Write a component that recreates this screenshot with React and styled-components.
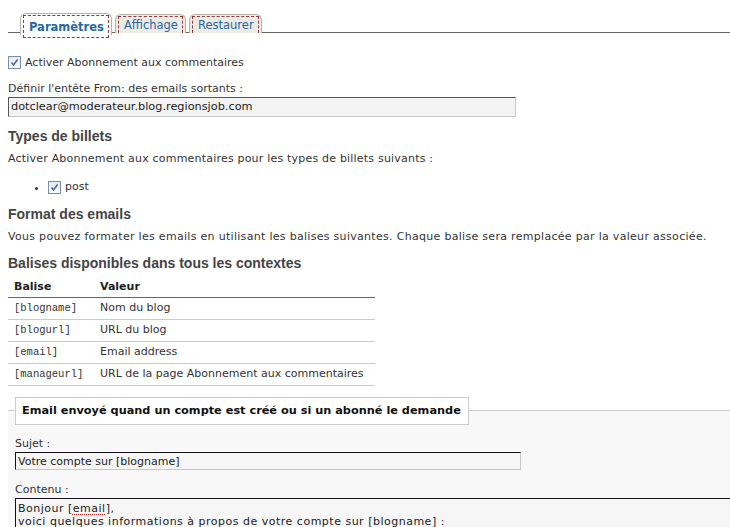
import React from 'react';
import styled, { createGlobalStyle } from 'styled-components';

const GlobalStyle = createGlobalStyle`
  html, body {
    margin: 0;
    padding: 0;
    background: #fff;
  }
  body {
    font-family: 'DejaVu Sans', Verdana, sans-serif;
    font-size: 11px;
    color: #333;
  }
`;

const Page = styled.div`
  padding: 13px 0 0 8px;
  overflow: hidden;
  height: 514px;
`;

const TabBar = styled.ul`
  display: flex;
  gap: 3px;
  margin: 0;
  padding: 0 0 0 12px;
  list-style: none;
  border-bottom: 1px solid #666;
  height: 19px;
`;

const Tab = styled.li`
  height: ${(p) => (p.$active ? '21px' : '18px')};
  margin-top: ${(p) => (p.$active ? '0' : '1px')};
  padding: 0 2px;
  border: 1px solid #b5b2aa;
  border-bottom: none;
  border-radius: 6px 6px 0 0;
  background: ${(p) => (p.$active ? '#fff' : '#edebe5')};
  display: flex;
  position: relative;
  z-index: ${(p) => (p.$active ? 2 : 1)};
`;

const TabLabel = styled.a`
  display: flex;
  align-items: center;
  padding: 0 4px 0 5px;
  margin-top: 1px;
  border: 1px dashed #8a3a3a;
  ${(p) => (p.$active ? 'margin-bottom: -3px;' : 'border-bottom: none;')}
  color: #2568a0;
  font-weight: ${(p) => (p.$active ? 'bold' : 'normal')};
  font-size: 11.5px;
  text-decoration: none;
`;

const CheckRow = styled.label`
  display: flex;
  align-items: center;
  gap: 4px;
  margin: ${(p) => p.$m || '0'};
`;

const Check = styled.span`
  width: 11px;
  height: 11px;
  border: 1px solid #7a8ea8;
  background: linear-gradient(#e4eaf2, #fafbfd);
  display: inline-flex;
  align-items: center;
  justify-content: center;
  flex: none;
`;

const CheckBox = () => (
  <Check>
    <svg width="9" height="9" viewBox="0 0 9 9">
      <path d="M1.5 4.5 L3.5 7 L7.5 1.5" fill="none" stroke="#4a6aa8" strokeWidth="1.6" />
    </svg>
  </Check>
);

const Label = styled.div`
  margin: ${(p) => p.$m || '0'};
  line-height: 13px;
`;

const TextInput = styled.div`
  width: ${(p) => p.$w};
  height: ${(p) => p.$h || '20px'};
  box-sizing: border-box;
  border: 1px solid #c8c8c8;
  border-top-color: ${(p) => p.$dark || '#777'};
  border-left-color: ${(p) => p.$dark || '#777'};
  background: ${(p) => p.$bg || '#f4f4f4'};
  padding: 2px 2px 1px;
  font-size: ${(p) => p.$fs || '11.3px'};
  color: #222;
  line-height: 14px;
  white-space: nowrap;
  overflow: hidden;
`;

const Heading = styled.h3`
  margin: ${(p) => p.$m || '0'};
  font-family: 'Liberation Sans', Arial, sans-serif;
  font-size: 14px;
  font-weight: bold;
  color: #444;
  line-height: 16px;
`;

const Para = styled.p`
  margin: ${(p) => p.$m || '0'};
  line-height: 13px;
  letter-spacing: ${(p) => p.$ls || '0'};
  white-space: nowrap;
`;

const List = styled.ul`
  margin: 15px 0 0;
  padding-left: 40px;
  list-style: disc;
  li::marker {
    font-size: 10px;
  }
`;

const ListItem = styled.li`
  line-height: 14px;
  & > label {
    display: inline-flex;
    align-items: center;
    gap: 4px;
  }
`;

const Table = styled.table`
  margin-top: 4px;
  width: 367px;
  border-collapse: collapse;
`;

const Th = styled.th`
  text-align: left;
  font-weight: bold;
  padding: 4px 6px 3px;
  border-bottom: 1px solid #666;
  height: 15px;
  color: #222;
`;

const Td = styled.td`
  padding: 3px 6px 4px;
  border-bottom: 1px solid #ccc;
  height: 14px;
  white-space: nowrap;
  ${(p) =>
    p.$code &&
    `font-family: 'Liberation Mono', 'DejaVu Sans Mono', monospace; font-size: 10.5px; padding-right: 2px; width: 78px;`}
`;

const Fieldset = styled.fieldset`
  margin: 11px 0 0;
  padding: 0 7px 0 7px;
  border: none;
  border-top: 1px solid #ccc;
  background: #f8f8f8;
  min-width: 0;
`;

const Legend = styled.legend`
  margin: 0;
  padding: 6px 7px 6px 6px;
  border: 1px solid #ccc;
  background: #fff;
  font-weight: bold;
  color: #111;
  font-size: 11.3px;
  line-height: 14px;
`;

const Area = styled.div`
  margin-top: 2px;
  margin-right: -20px;
  height: 40px;
  border: 1px solid #ccc;
  border-top-color: #111;
  border-left-color: #111;
  background: #f6f6f6;
  padding: 3px 2px;
  color: #222;
  line-height: 13px;
  letter-spacing: 0.5px;
  white-space: nowrap;
`;

const Spell = styled.span`
  text-decoration: underline dotted #d02020;
  text-underline-offset: 2px;
`;

const rows = [
  ['[blogname]', 'Nom du blog'],
  ['[blogurl]', 'URL du blog'],
  ['[email]', 'Email address'],
  ['[manageurl]', 'URL de la page Abonnement aux commentaires'],
];

export default function App() {
  return (
    <>
      <GlobalStyle />
      <Page>
        <TabBar>
          <Tab $active>
            <TabLabel $active href="#">Paramètres</TabLabel>
          </Tab>
          <Tab>
            <TabLabel href="#">Affichage</TabLabel>
          </Tab>
          <Tab>
            <TabLabel href="#">Restaurer</TabLabel>
          </Tab>
        </TabBar>

        <CheckRow $m="23px 0 0">
          <CheckBox />
          <span>Activer Abonnement aux commentaires</span>
        </CheckRow>

        <Label $m="13px 0 2px">Définir l'entête From: des emails sortants :</Label>
        <TextInput $w="508px" $dark="#555" $bg="#f3f3f3">
          dotclear@moderateur.blog.regionsjob.com
        </TextInput>

        <Heading $m="11px 0 0">Types de billets</Heading>
        <Para $m="8px 0 0" $ls="0.2px">
          Activer Abonnement aux commentaires pour les types de billets suivants :
        </Para>
        <List>
          <ListItem>
            <label>
              <CheckBox />
              <span>post</span>
            </label>
          </ListItem>
        </List>

        <Heading $m="10px 0 0">Format des emails</Heading>
        <Para $m="8px 0 0" $ls="0.3px">
          Vous pouvez formater les emails en utilisant les balises suivantes. Chaque balise sera
          remplacée par la valeur associée.
        </Para>

        <Heading $m="12px 0 0">Balises disponibles dans tous les contextes</Heading>
        <Table>
          <thead>
            <tr>
              <Th>Balise</Th>
              <Th>Valeur</Th>
            </tr>
          </thead>
          <tbody>
            {rows.map(([tag, value]) => (
              <tr key={tag}>
                <Td $code>{tag}</Td>
                <Td>{value}</Td>
              </tr>
            ))}
          </tbody>
        </Table>

        <Fieldset>
          <Legend>Email envoyé quand un compte est créé ou si un abonné le demande</Legend>
          <Label $m="12px 0 2px">Sujet :</Label>
          <TextInput $w="506px" $h="18px" $dark="#111" $bg="#f6f6f6" $fs="11px">
            Votre compte sur [blogname]
          </TextInput>
          <Label $m="13px 0 0">Contenu :</Label>
          <Area>
            Bonjour [<Spell>email</Spell>],
            <br />
            voici quelques informations à propos de votre compte sur [<Spell>blogname</Spell>] :
          </Area>
        </Fieldset>
      </Page>
    </>
  );
}
